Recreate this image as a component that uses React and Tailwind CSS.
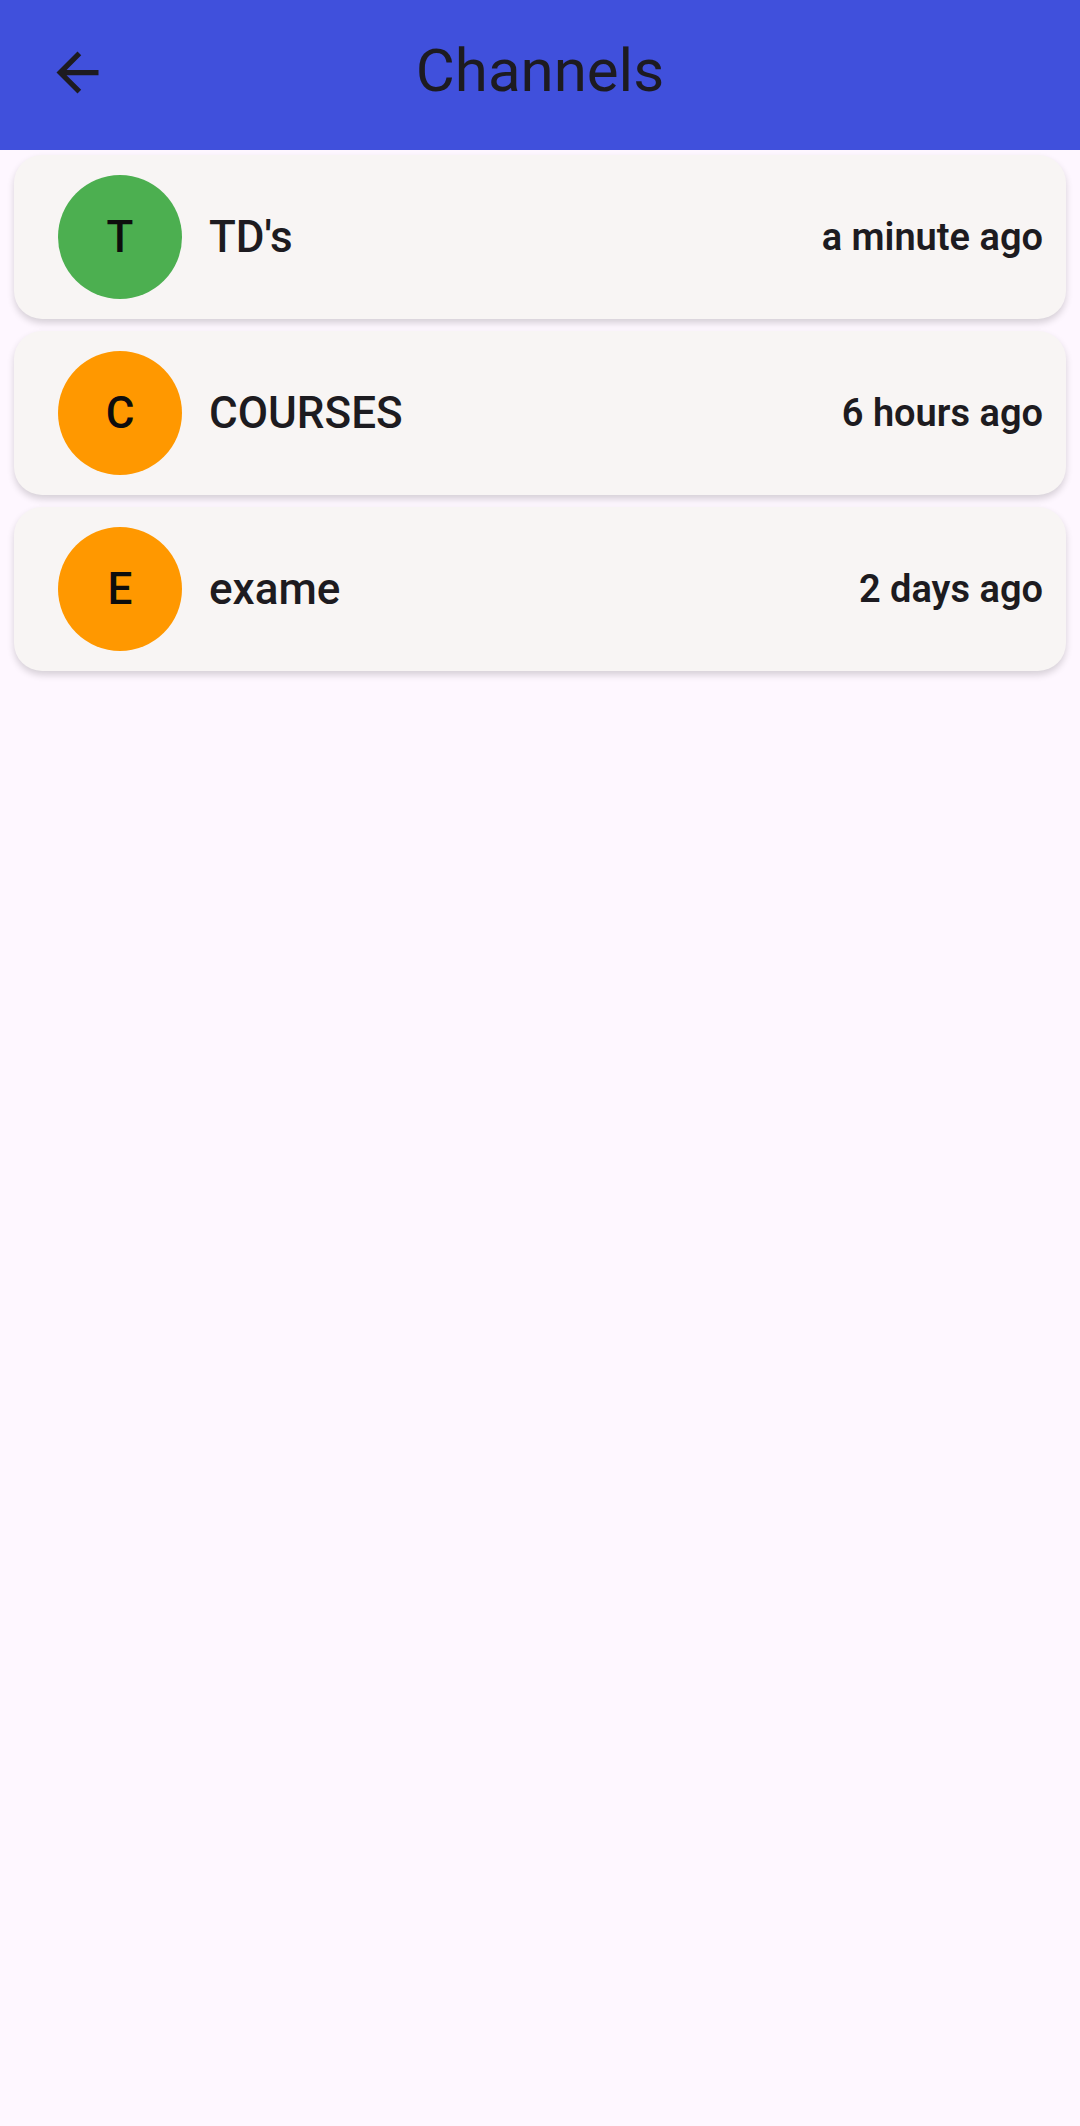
import React from 'react'

const channels = [
  { name: "TD's", letter: 'T', color: 'bg-[#4caf50]', time: 'a minute ago' },
  { name: 'COURSES', letter: 'C', color: 'bg-[#ff9800]', time: '6 hours ago' },
  { name: 'exame', letter: 'E', color: 'bg-[#ff9800]', time: '2 days ago' },
]

function BackArrow() {
  return (
    <svg viewBox="0 0 24 24" className="w-[63px] h-[63px]" fill="#1d1b20">
      <path d="M20 11H7.83l5.59-5.59L12 4l-8 8 8 8 1.41-1.41L7.83 13H20v-2z" />
    </svg>
  )
}

function ChannelCard({ channel }) {
  return (
    <div className="h-[164px] rounded-[28px] bg-[#f8f5f4] shadow-[0_4px_7px_rgba(0,0,0,0.16)] flex items-center pl-[44px] pr-[23px]">
      <div
        className={`w-[124px] h-[124px] rounded-full ${channel.color} flex items-center justify-center text-[44px] font-medium text-[#0d0d0d] shrink-0`}
      >
        {channel.letter}
      </div>
      <div className="ml-[27px] flex-1 text-[44px] font-medium text-[#1d1b20]">{channel.name}</div>
      <div className="text-[38px] font-semibold text-[#1d1b20]">{channel.time}</div>
    </div>
  )
}

export default function App() {
  return (
    <div className="min-h-[2126px] bg-[#fef7ff]" style={{ fontFamily: 'Roboto, "Noto Sans", sans-serif' }}>
      <div className="relative h-[150px] bg-[#4050dc] flex items-center justify-center pb-[8px]">
        <button className="absolute left-[46px] top-[41px]">
          <BackArrow />
        </button>
        <h1 className="text-[60px] font-normal text-[#1d1b20]">Channels</h1>
      </div>
      <div className="px-[14px] pt-[5px] flex flex-col gap-[12px]">
        {channels.map(c => (
          <ChannelCard key={c.name} channel={c} />
        ))}
      </div>
    </div>
  )
}
